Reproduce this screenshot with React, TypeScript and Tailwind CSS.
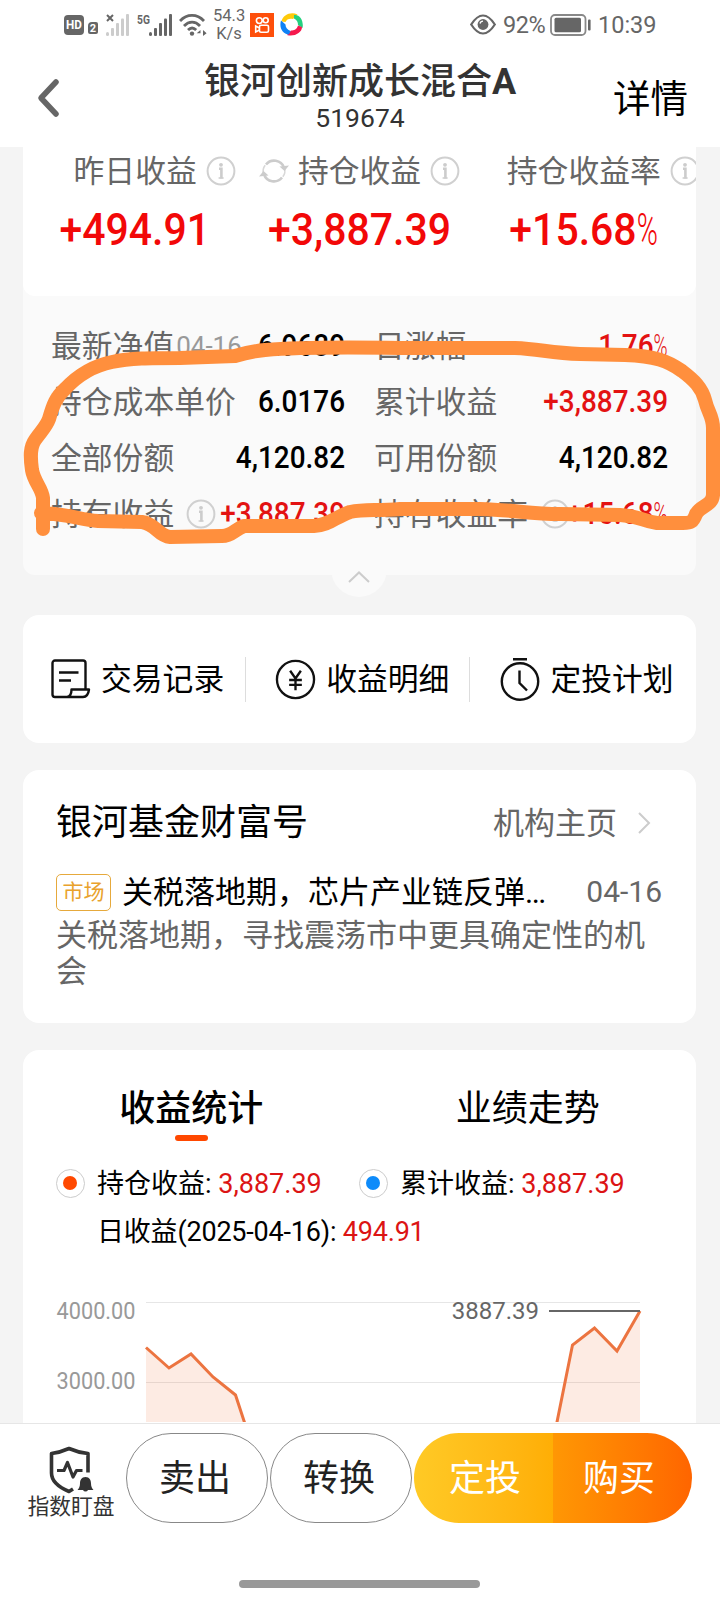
import type { ReactNode } from "react";
import { clsx } from "clsx";

type Detail = {
  label: string;
  value: string;
  date?: string;
  info?: boolean;
  up?: boolean;
  percent?: boolean;
};

const details: Detail[] = [
  { label: "最新净值", date: "04-16", value: "6.9689" },
  { label: "日涨幅", value: "1.76", percent: true, up: true },
  { label: "持仓成本单价", value: "6.0176" },
  { label: "累计收益", value: "+3,887.39", up: true },
  { label: "全部份额", value: "4,120.82" },
  { label: "可用份额", value: "4,120.82" },
  { label: "持有收益", value: "+3,887.39", info: true, up: true },
  { label: "持有收益率", value: "+15.68", percent: true, info: true, up: true },
];

function InfoIcon() {
  return (
    <svg className="h-[30px] w-[30px] shrink-0" viewBox="0 0 30 30" fill="none">
      <circle cx="15" cy="15" r="13.4" stroke="#d0d0d0" strokeWidth="2" />
      <circle cx="15" cy="8.800" r="1.900" fill="#ccc" />
      <path d="M13 12.800h2.400v9.700" stroke="#ccc" strokeWidth="2.600" />
      <path d="M12.600 22h5" stroke="#ccc" strokeWidth="1.400" />
    </svg>
  );
}

function RefreshIcon() {
  return (
    <svg className="h-[30px] w-[30px] shrink-0" viewBox="0 0 30 30" fill="none">
      <path d="M7 8.500A10.500 10.500 0 0 1 25 11.500" stroke="#ccc" strokeWidth="2.600" />
      <path d="M23 21.500A10.500 10.500 0 0 1 5 18.500" stroke="#ccc" strokeWidth="2.600" />
      <path d="M4.500 18C3.600 14.500 4.300 11.500 6.200 9.200M25.500 12c.9 3.500.2 6.500-1.700 8.800" stroke="#d8d8d8" strokeWidth="1.600" />
      <path d="M20.500 10.500 30 9.500l-4.500 5.500zM9.500 19.500 0 20.500l4.500-5.500z" fill="#ccc" />
    </svg>
  );
}

function Signal({ color }: { color: string }) {
  return (
    <svg className="h-[22px] w-[23px]" viewBox="0 0 23 22" fill={color}>
      <rect x="0" y="18" width="3" height="4" rx="1.500" />
      <rect x="5" y="14" width="3" height="8" rx="1" />
      <rect x="10" y="9" width="3" height="13" rx="1" />
      <rect x="15" y="4.500" width="3" height="17.500" rx="1" />
      <rect x="20" y="0" width="3" height="22" rx="1" />
    </svg>
  );
}

function StatusBar() {
  return (
    <div className="flex h-[49px] items-center pl-16 text-[#666]">
      <div className="flex h-5 w-5 items-center justify-center rounded-[4px] bg-[#666] text-[13px] leading-none font-bold text-white">
        <span className="scale-x-90">HD</span>
      </div>
      <div className="mt-[7px] ml-1 flex h-3 w-[10px] items-center justify-center rounded-[2px] rounded-tl-[4px] bg-[#666] text-[11px] leading-none font-bold text-white">
        2
      </div>
      <div className="relative ml-2 h-[22px] w-[23px]">
        <Signal color="#ccc" />
        <svg className="absolute top-0 left-0 h-2 w-2" viewBox="0 0 8 8">
          <path d="m1 1 6 6M7 1 1 7" stroke="#666" strokeWidth="2" />
        </svg>
      </div>
      <span className="ml-2 h-[22px] w-3 origin-left scale-x-[0.76] text-[13.500px] leading-[10px] font-bold">5G</span>
      <Signal color="#666" />
      <svg className="ml-[7px] h-[22px] w-7" viewBox="0 0 28 22" fill="none" stroke="#666" strokeWidth="2.800">
        <path d="M1 7C8-.4 18-.4 25 7M5 12c5-5.200 11.200-5.200 16 0M9 16c2.600-2.600 5.600-2.600 8.200 0" />
        <circle cx="13" cy="19.600" r="2.200" fill="#666" stroke="none" />
        <path d="m21.500 16-3.800 3.200h3.800zM24 22v-6l3.600 3.200z" fill="#666" stroke="none" />
      </svg>
      <div className="ml-1.5 w-[32px] text-center text-[16.500px] leading-[18px]">
        <div>54.3</div>
        <div>K/s</div>
      </div>
      <svg className="ml-[5px] h-6 w-6" viewBox="0 0 24 24" fill="none" stroke="#fff" strokeWidth="1.600">
        <rect width="24" height="24" fill="#fe4f0b" stroke="none" />
        <circle cx="9.300" cy="7.600" r="2.900" />
        <circle cx="15.700" cy="7.300" r="2.500" />
        <rect x="9.500" y="12.300" width="9" height="7" rx="1.500" />
        <path d="m9.500 15-3.800-2v6l3.800-2" />
      </svg>
      <svg className="ml-[6px] h-[23px] w-[23px]" viewBox="0 0 23 23">
        <path d="M1.500 8.500C3 1.500 11-1.500 17.500 1.500L13 6C10 5 6.500 6 5.500 9z" fill="#ffca0a" />
        <path d="M14 2c6-1 10 6 8.500 13L18 12c0-3-1-5-4-6.500z" fill="#23d17f" />
        <path d="M22 14c0 6-8 10-15 8l4-4.500c3 0 6-1 7-5z" fill="#f5194d" />
        <path d="M9 21.500C2 21-1 14 1 7.500l4.500 4c0 3 1.500 5 5 6.500z" fill="#0f82f5" />
      </svg>
      <svg className="ml-[167px] h-[21px] w-[26px]" viewBox="0 0 26 21" fill="none" stroke="#666">
        <path d="M1.200 10.500C5 4.500 9 1.500 13 1.500s8 3 11.800 9c-3.800 6-7.800 9-11.800 9s-8-3-11.800-9z" strokeWidth="2.200" />
        <circle cx="13" cy="10.500" r="5.400" fill="#666" stroke="none" />
        <path d="M10 9.500c.4-1.500 1.500-2.300 3-2.300" stroke="#fff" strokeWidth="1.300" />
      </svg>
      <span className="mt-[2px] ml-[7px] w-[43px] text-[23.500px] tracking-[-0.5px]">92%</span>
      <svg className="ml-[4px] h-[22px] w-[42px]" viewBox="0 0 42 22" fill="none">
        <rect x="1" y="1" width="34.500" height="20" rx="4" stroke="#888" strokeWidth="1.800" />
        <rect x="4.500" y="3.800" width="26.500" height="14.500" rx="1.500" fill="#666" />
        <rect x="38" y="5.500" width="2.600" height="11" rx="1" fill="#666" />
      </svg>
      <span className="mt-[2px] ml-[6px] text-[23.500px]">10:39</span>
    </div>
  );
}

function Header() {
  return (
    <header className="h-[147px] bg-white">
      <StatusBar />
      <div className="grid h-[98px] grid-cols-[120px_1fr_120px] items-center">
        <svg className="ml-[37px] h-10 w-6" viewBox="0 0 24 40" fill="none">
          <path d="M19 4 4 20l15 16" stroke="#666" strokeWidth="5.500" strokeLinecap="round" strokeLinejoin="round" />
        </svg>
        <div className="pt-1 text-center whitespace-nowrap text-[#333]">
          <h1 className="text-[36px] leading-[36px] font-medium">
            银河创新成长混合<span className="font-bold">A</span>
          </h1>
          <p className="text-[26.500px] leading-9">519674</p>
        </div>
        <button className="pt-[3px] pr-8 text-right text-[37.500px] leading-none whitespace-nowrap text-black">详情</button>
      </div>
    </header>
  );
}

type SummaryProps = { label: string; value: string; percent?: boolean; refresh?: boolean };

function Summary({ label, value, percent, refresh }: SummaryProps) {
  return (
    <div>
      <div className="flex h-8 items-center justify-center">
        <span className="w-[39px] shrink-0">{refresh && <RefreshIcon />}</span>
        <span className="shrink-0 pt-[2px] text-[30.800px] leading-8 text-[#666]">{label}</span>
        <span className="flex w-[39px] shrink-0 justify-end">
          <InfoIcon />
        </span>
      </div>
      <div className="mt-[19px] flex h-[46px] items-center justify-center text-[45px] leading-none font-medium text-[#f20808]">
        <span className="scale-x-[0.91] whitespace-nowrap">
          {value}
          {percent && <span className="inline-block w-[24px] origin-left scale-x-[0.7] font-light">%</span>}
        </span>
      </div>
    </div>
  );
}

function DetailRow({ label, value, date, info, up, percent }: Detail) {
  return (
    <div className="flex h-14 items-center">
      <span className="pt-px text-[30.800px] leading-8 text-[#666]">{label}</span>
      {date && <span className="ml-[2px] text-[26px] leading-8 text-[#999]">{date}</span>}
      {info && (
        <span className="ml-3">
          <InfoIcon />
        </span>
      )}
      <span
        className={clsx(
          "ml-auto w-0 origin-right scale-x-[0.9] text-[31px] leading-8 font-medium",
          up ? "text-[#e31212]" : "text-black",
        )}
      >
        <span className="float-right whitespace-nowrap">
          {value}
          {percent && <span className="inline-block w-4 origin-left scale-x-[0.68] font-light">%</span>}
        </span>
      </span>
    </div>
  );
}

function Holdings() {
  return (
    <section className="relative ml-[23px] w-[673px] rounded-b-xl bg-[#fafafa]">
      <div className="absolute -bottom-[22px] left-[308px] flex h-14 w-14 items-end justify-center rounded-full bg-[#fafafa] pb-[14px]">
        <svg className="h-3 w-[22px]" viewBox="0 0 22 12" fill="none">
          <path d="M1 11 11 1.500 21 11" stroke="#ccc" strokeWidth="2" />
        </svg>
      </div>
      <div className="grid h-[149px] grid-cols-3 overflow-hidden rounded-b-xl bg-white pt-2">
        <Summary label="昨日收益" value="+494.91" />
        <Summary label="持仓收益" value="+3,887.39" refresh />
        <Summary label="持仓收益率" value="+15.68" percent />
      </div>
      <div className="relative grid h-[279px] grid-cols-2 content-start gap-x-[29px] px-7 pt-[22px]">
        {details.map((item) => (
          <DetailRow key={item.label} {...item} />
        ))}
      </div>
      <Scribble />
    </section>
  );
}

// Hand-drawn marker loop round the position details.
function Scribble() {
  return (
    <svg className="pointer-events-none absolute top-0 -left-[23px] h-[428px] w-[720px]" viewBox="0 147 720 428" fill="none">
      <path
        d="M43 529V498C42 488 34 482 32 470C30 456 30 447 35 440C42 430 46 427 49 419C53 405 56 397 65 389C78 375 92 366 112 362C130 358 150 358 180 358L235 356C248 352 255 351 265 350C300 347 340 347 400 348L515 348C540 349 550 353 580 354L625 355C655 356 668 361 682 371C694 380 702 388 705 400C708 413 713 416 713 428V495C712 506 701 505 696 514C693 522 691 523 683 523H657C642 521 640 516 620 515L560 514C530 514 515 510 480 509L400 509C375 511 365 509 350 512C335 517 330 525 314 526H244C235 529 232 536 222 536L170 537C158 536 156 524 142 522L98 521C80 520 70 514 41 513"
        stroke="#ff8f3d"
        strokeWidth="14"
        strokeLinecap="round"
        strokeLinejoin="round"
      />
    </svg>
  );
}

function Action({ label, children }: { label: string; children: ReactNode }) {
  return (
    <button className="flex items-center gap-[10px] text-[30.800px] leading-8 whitespace-nowrap text-black">
      {children}
      <span className="pt-[2px]">{label}</span>
    </button>
  );
}

function Actions() {
  return (
    <section className="mt-10 ml-[23px] flex h-32 w-[673px] items-center rounded-2xl bg-white pl-7">
      <Action label="交易记录">
        <svg className="h-10 w-10" viewBox="0 0 40 40" fill="none" stroke="#111" strokeWidth="2.400" strokeLinejoin="round">
          <path d="M34.500 30V4a2.500 2.500 0 0 0-2.500-2.500H4A2.500 2.500 0 0 0 1.500 4v31.500A2.500 2.500 0 0 0 4 38h28c3.500 0 5.500-3.500 6-7.500H20.500c0 3.800-1.500 7-4.500 7.500" />
          <path d="M8 13.500h19.500M8 21.500h12" />
        </svg>
      </Action>
      <i className="ml-[21px] h-[45px] w-px bg-[#ddd]" />
      <span className="ml-[29px]">
        <Action label="收益明细">
          <svg className="h-[41px] w-[41px]" viewBox="0 0 42 42" fill="none" stroke="#111" strokeWidth="2.400">
            <circle cx="21" cy="21" r="19" />
            <path d="m15.500 12 5.500 8 5.500-8M21 20v12M14.500 21.500h13M14.500 26.500h13" />
          </svg>
        </Action>
      </span>
      <i className="ml-[20px] h-[45px] w-px bg-[#ddd]" />
      <span className="ml-[30px]">
        <Action label="定投计划">
          <svg className="h-11 w-10" viewBox="0 0 40 44" fill="none" stroke="#111" strokeWidth="2.400">
            <circle cx="20" cy="24.500" r="18.200" />
            <path d="M13 2.200h14M19.500 13.500V26l7.500 7.500" />
          </svg>
        </Action>
      </span>
    </section>
  );
}

function News() {
  return (
    <section className="mt-[27px] ml-[23px] h-[253px] w-[673px] rounded-2xl bg-white px-[33px] pt-[35px]">
      <div className="flex h-9 items-center">
        <h2 className="text-[36px] leading-9 text-black">银河基金财富号</h2>
        <span className="ml-auto pt-px text-[31px] leading-9 text-[#666]">机构主页</span>
        <svg className="mr-[12px] ml-[21px] h-[22px] w-[13px]" viewBox="0 0 13 22" fill="none">
          <path d="m1 1 10 10L1 21" stroke="#ccc" strokeWidth="2" />
        </svg>
      </div>
      <div className="mt-[31px] flex h-10 items-center text-[31px] leading-9 whitespace-nowrap">
        <span className="flex h-[37px] w-[55px] shrink-0 items-center justify-center rounded-[5px] border border-[#e6a93c] text-[21px] leading-none text-[#e9a22c]">
          市场
        </span>
        <span className="ml-[11px] pt-[2px] text-black">
          关税落地期，芯片产业链反弹<span className="tracking-[-1.5px]">...</span>
        </span>
        <span className="mr-px ml-auto text-[30px] text-[#666]">04-16</span>
      </div>
      <p className="mt-[6px] text-[31px] leading-9 text-[#666]">关税落地期，寻找震荡市中更具确定性的机会</p>
    </section>
  );
}

function Legend({ label, value, dot }: { label: string; value: string; dot: string }) {
  return (
    <div className="flex items-center">
      <span className="flex h-[29px] w-[29px] items-center justify-center rounded-full border border-[#ccc] pr-px pb-px">
        <i className={clsx("h-[14px] w-[14px] rounded-full", dot)} />
      </span>
      <span className="ml-3 pt-px text-[27px] leading-8 whitespace-nowrap text-black">
        {label}: <span className="text-[#dc1414]">{value}</span>
      </span>
    </div>
  );
}

function Chart() {
  return (
    <svg className="mt-[33px] block h-[141px] w-[673px]" viewBox="23 1282 673 141">
      <path d="M146 1303.500H640M146 1383.500H640" stroke="#e6e6e6" />
      <path d="M146 1348.500 169 1369 191 1355 213 1378 235.500 1396 246 1425H146z" fill="#f0733a" fillOpacity="0.140" />
      <path d="M556 1425 572.500 1346 594.500 1329 617 1352 640 1312V1425z" fill="#f0733a" fillOpacity="0.140" />
      <g fill="none" stroke="#ec7440" strokeWidth="3">
        <path d="M146 1348.500 169 1369 191 1355 213 1378 235.500 1396 246 1428" />
        <path d="M556 1428 572.500 1346 594.500 1329 617 1352 640 1312" />
      </g>
      <path d="M549 1312H640" stroke="#666" strokeWidth="2" />
      <g fontSize="23" fill="#999" textAnchor="end">
        <text x="135.500" y="1320" textLength="79" lengthAdjust="spacingAndGlyphs">
          4000.00
        </text>
        <text x="135.500" y="1390" textLength="79" lengthAdjust="spacingAndGlyphs">
          3000.00
        </text>
        <text x="539" y="1320" fontSize="24" fill="#666">
          3887.39
        </text>
      </g>
    </svg>
  );
}

function Statistics() {
  return (
    <section className="mt-[27px] ml-[23px] h-[373px] w-[673px] overflow-hidden rounded-t-2xl bg-white pt-[39px]">
      <div className="grid h-[52px] grid-cols-2 text-center text-[36px] leading-10 text-black">
        <div>
          <div className="font-medium">收益统计</div>
          <i className="mx-auto mt-[6px] block h-[6px] w-[33px] rounded-full bg-[#ff4800]" />
        </div>
        <div>业绩走势</div>
      </div>
      <div className="mt-[26px] flex h-8 items-center pl-[33px]">
        <div className="w-[303px]">
          <Legend label="持仓收益" value="3,887.39" dot="bg-[#ff4800]" />
        </div>
        <Legend label="累计收益" value="3,887.39" dot="bg-[#0d8bfa]" />
      </div>
      <div className="mt-[17px] pl-[74px] text-[27px] leading-8 tracking-[-0.2px] text-black">
        日收益(2025-04-16): <span className="text-[#dc1414]">494.91</span>
      </div>
      <Chart />
    </section>
  );
}

function BottomBar() {
  const outline =
    "flex h-[90px] w-[142px] items-center justify-center rounded-full border border-[#888] text-[36px] leading-none text-[#222]";

  return (
    <footer className="h-[177px] border-t border-[#e6e6e6] bg-white">
      <div className="flex pt-[9px] pl-[26px]">
        <div className="flex w-[90px] flex-col items-center pt-[13px]">
          <svg className="h-12 w-[46px]" viewBox="0 0 46 48" fill="none" stroke="#333" strokeWidth="3.600">
            <path d="M40 26.500V7.500Q30 6.500 21 2.500 12 6.500 3.500 7.500V27c0 8 8 14.500 17.500 18.500l4-2.500" strokeLinejoin="round" />
            <path d="M9 24.500h7l3.500-8 5.500 14.500 3.500-6.500h6" strokeWidth="3.200" strokeLinejoin="round" />
            <path d="M37.500 31c-4 0-5.500 3-5.500 6.500 0 3-1 5-2.500 6.500h5.500a2.800 2.800 0 0 0 5 0h5.500c-1.500-1.500-2.500-3.500-2.500-6.500 0-3.500-1.500-6.500-5.500-6.500z" fill="#333" stroke="none" />
          </svg>
          <span className="pt-px text-[21.800px] leading-6 whitespace-nowrap text-[#333]">指数盯盘</span>
        </div>
        <button className={clsx(outline, "ml-[10px] pt-[2px] pr-1")}>卖出</button>
        <button className={clsx(outline, "ml-[2px] pt-[2px] pr-1")}>转换</button>
        <div className="ml-[2px] flex h-[90px] w-[278px] overflow-hidden rounded-full text-[36px] leading-none text-white">
          <button className="w-[139px] bg-linear-to-r from-[#ffca25] to-[#ffae05] pt-[2px] pl-[3px]">定投</button>
          <button className="flex-1 bg-linear-to-r from-[#ff9704] to-[#ff6500] pt-[2px] pr-[7px]">购买</button>
        </div>
      </div>
      <div className="mt-[57px] ml-[239px] h-2 w-[241px] rounded-full bg-[#999]" />
    </footer>
  );
}

export default function App() {
  return (
    <main className="h-[1600px] w-[720px] overflow-hidden bg-[#f4f4f4] font-[Roboto,'Noto_Sans_CJK_SC',sans-serif]">
      <Header />
      <Holdings />
      <Actions />
      <News />
      <Statistics />
      <BottomBar />
    </main>
  );
}
